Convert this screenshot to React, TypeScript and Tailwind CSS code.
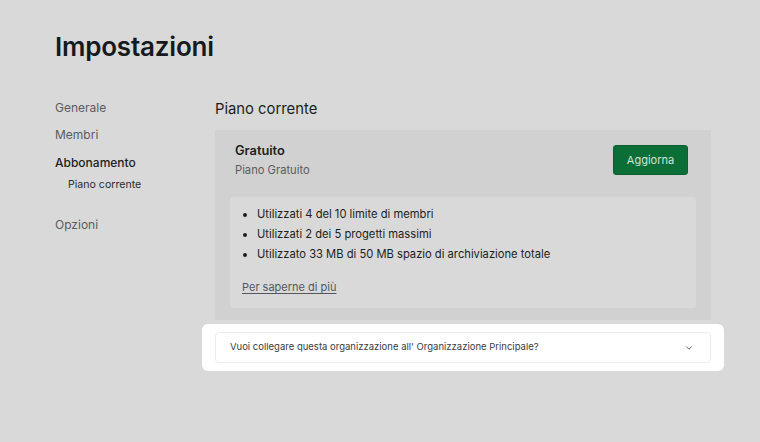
import { ChevronDown } from 'lucide-react';

const usage = [
  'Utilizzati 4 del 10 limite di membri',
  'Utilizzati 2 dei 5 progetti massimi',
  'Utilizzato 33 MB di 50 MB spazio di archiviazione totale',
];

export default function App() {
  return (
    <div
      className="min-h-screen w-full bg-[#d9d9d9] text-[#1c1e21]"
      style={{ fontFamily: 'Inter, "Noto Sans", sans-serif' }}
    >
      <div className="pl-[55px] pt-[30px]">
        <h1 className="text-[26px] font-semibold leading-[34px] tracking-[-0.2px] text-[#16191d]">
          Impostazioni
        </h1>

        <div className="mt-[34px] flex">
          {/* sidebar */}
          <nav className="w-[160px] shrink-0 text-[12px]">
            <div className="h-[27px] leading-[20px] text-[#5a5c5f]">Generale</div>
            <div className="h-[28px] leading-[20px] text-[#5a5c5f]">Membri</div>
            <div className="leading-[20px] font-medium text-[#1c1e21]">Abbonamento</div>
            <div className="mt-[2px] pl-[13px] text-[10.6px] leading-[20px] text-[#2a2c2f]">
              Piano corrente
            </div>
            <div className="mt-[20px] leading-[20px] text-[#5a5c5f]">Opzioni</div>
          </nav>

          {/* main */}
          <main className="w-[496px]">
            <h2 className="text-[14.8px] leading-[22px] font-normal text-[#1c1e21]">Piano corrente</h2>

            <section className="mt-[10px] bg-[#d1d1d1] px-[15px] pt-[12px] pb-[12px]">
              <div className="flex items-start justify-between px-[5px]">
                <div>
                  <div className="text-[12.8px] font-semibold leading-[18px] text-[#1c1e21]">Gratuito</div>
                  <div className="mt-[1px] text-[11.2px] leading-[18px] text-[#5a5c5f]">Piano Gratuito</div>
                </div>
                <button className="mt-[3px] mr-[3px] h-[30px] w-[75px] rounded-[3px] border border-[#0a5e2f] bg-[#0b6e36] text-[11px] text-[#d3e4d8]">
                  Aggiorna
                </button>
              </div>

              <div className="mt-[18px] rounded-[3px] bg-[#d9d9d9] px-[12px] pt-[7px] pb-[11px]">
                <ul className="list-disc pl-[15px] text-[11.2px] leading-[20px] text-[#1c1e21]">
                  {usage.map((u) => (
                    <li key={u}>{u}</li>
                  ))}
                </ul>
                <a className="mt-[13px] block text-[11px] leading-[20px] text-[#55575a] underline underline-offset-2">
                  Per saperne di più
                </a>
              </div>
            </section>

            {/* highlighted block */}
            <div className="-mx-[13px] mt-[4px] rounded-[6px] bg-white px-[13px] py-[8px]">
              <div className="flex h-[31px] items-center justify-between rounded-[4px] border border-[#ececec] pl-[14px] pr-[16px]">
                <span className="text-[9.5px] text-[#3a3c40]">
                  Vuoi collegare questa organizzazione all' Organizzazione Principale?
                </span>
                <ChevronDown size={10} strokeWidth={2} className="text-[#45474b]" />
              </div>
            </div>
          </main>
        </div>
      </div>
    </div>
  );
}
